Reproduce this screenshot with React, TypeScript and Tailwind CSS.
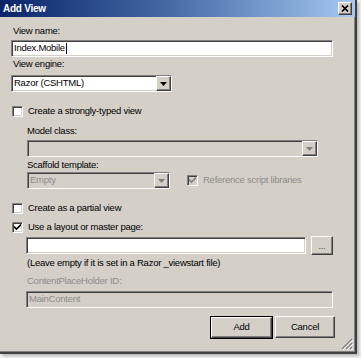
import React from 'react'

const font = { fontFamily: '"Liberation Sans", Arial, sans-serif' }

const sunken = 'border border-t-[#808080] border-l-[#808080] border-b-white border-r-white shadow-[inset_1px_1px_0_#404040,inset_-1px_-1px_0_#d4d0c8]'
const raised = 'border border-t-white border-l-white border-b-[#404040] border-r-[#404040] shadow-[inset_-1px_-1px_0_#808080]'

function Arrow({ disabled }: { disabled?: boolean }) {
  return (
    <div className={`flex items-center justify-center w-[15px] h-full bg-[#d4d0c8] ${raised}`}>
      <svg width="7" height="4" viewBox="0 0 7 4">
        <path d="M0 0h7L3.5 4z" fill={disabled ? '#808080' : '#000'} />
      </svg>
    </div>
  )
}

function Select({ value, disabled, className }: { value: string; disabled?: boolean; className: string }) {
  return (
    <div className={`flex h-[17px] ${disabled ? 'bg-[#d4d0c8]' : 'bg-white'} ${sunken} ${className}`}>
      <div className={`flex-1 flex items-center pl-[2px] ${disabled ? 'text-[#8c8c8c]' : 'text-black'}`}>{value}</div>
      <Arrow disabled={disabled} />
    </div>
  )
}

function Check({ checked, disabled }: { checked?: boolean; disabled?: boolean }) {
  return (
    <div className={`w-[11px] h-[11px] flex items-center justify-center ${disabled ? 'bg-[#d4d0c8]' : 'bg-white'} ${sunken}`}>
      {checked && (
        <svg width="7" height="7" viewBox="0 0 7 7">
          <path d="M0 2.5l2.5 2.5L7 0.5" stroke={disabled ? '#808080' : '#000'} strokeWidth="1.6" fill="none" />
        </svg>
      )}
    </div>
  )
}

export default function App() {
  return (
    <div className="w-[361px] h-[358px] bg-[#f2f2f2] text-[9.5px] tracking-[-0.25px] text-black" style={font}>
      <div className="w-[357px] h-[354px] bg-[#d4d0c8] border-r-2 border-b-2 border-r-[#404040] border-b-[#404040] shadow-[inset_-1px_-1px_0_#808080,2px_2px_3px_rgba(0,0,0,0.25)] flex flex-col relative">
        {/* title bar */}
        <div className="h-[17px] bg-linear-to-r from-[#0a246a] via-[#4a6ea8] to-[#a6caf0] flex items-center justify-between pl-[3px] pr-[3px]">
          <span className="text-white font-bold text-[10px]">Add View</span>
          <div className={`w-[14px] h-[13px] bg-[#d4d0c8] flex items-center justify-center ${raised}`}>
            <svg width="8" height="7" viewBox="0 0 8 7">
              <path d="M1 0.5l6 6M7 0.5l-6 6" stroke="#000" strokeWidth="1.7" />
            </svg>
          </div>
        </div>

        <div className="pl-[11px] flex flex-col">
          <div className="mt-[8px] ml-[2px] h-[12px] leading-[12px]">View name:</div>
          <div className={`mt-[3px] w-[322px] h-[17px] bg-white flex items-center pl-[2px] ${sunken}`}>
            Index.Mobile<span className="w-px h-[11px] bg-black ml-[1px]" />
          </div>

          <div className="mt-[1px] ml-[2px] h-[12px] leading-[12px]">View engine:</div>
          <Select value="Razor (CSHTML)" className="mt-[5px] w-[161px]" />

          <div className="mt-[14px] flex items-center gap-[5px] h-[11px] ml-[1px]">
            <Check />
            <span>Create a strongly-typed view</span>
          </div>

          <div className="ml-[16px] flex flex-col">
            <div className="mt-[8px] h-[12px] leading-[12px]">Model class:</div>
            <Select value="" disabled className="mt-[3px] w-[291px]" />
            <div className="mt-[2px] h-[12px] leading-[12px]">Scaffold template:</div>
            <div className="mt-[1px] flex items-center">
              <Select value="Empty" disabled className="w-[143px]" />
              <div className="ml-[17px] flex items-center gap-[5px] text-[#8c8c8c]">
                <Check checked disabled />
                <span>Reference script libraries</span>
              </div>
            </div>
          </div>

          <div className="mt-[14px] flex items-center gap-[5px] h-[11px] ml-[1px]">
            <Check />
            <span>Create as a partial view</span>
          </div>
          <div className="mt-[8px] flex items-center gap-[5px] h-[11px] ml-[1px]">
            <Check checked />
            <span>Use a layout or master page:</span>
          </div>

          <div className="ml-[15px] flex flex-col">
            <div className="mt-[3px] flex items-center">
              <div className={`w-[280px] h-[17px] bg-white ${sunken}`} />
              <div className={`ml-[5px] w-[22px] h-[19px] bg-[#d4d0c8] flex items-end justify-center pb-[3px] text-[#404040] text-[9px] leading-[9px] ${raised}`}>...</div>
            </div>
            <div className="mt-[2px] ml-[1px] h-[12px] leading-[12px]">(Leave empty if it is set in a Razor _viewstart file)</div>
            <div className="mt-[6px] ml-[1px] h-[12px] leading-[12px] text-[#8c8c8c]">ContentPlaceHolder ID:</div>
            <div className={`mt-[4px] w-[307px] h-[17px] bg-[#d4d0c8] flex items-center pl-[2px] text-[#8c8c8c] ${sunken}`}>MainContent</div>
          </div>

          <div className="mt-[8px] flex justify-end pr-[20px] gap-[2px]">
            <div className="w-[63px] h-[23px] border border-black">
              <div className={`w-full h-full bg-[#d4d0c8] flex items-center justify-center ${raised}`}>Add</div>
            </div>
            <div className={`w-[60px] h-[22px] bg-[#d4d0c8] flex items-center justify-center ${raised}`}>Cancel</div>
          </div>
        </div>

        {/* size grip */}
        <svg className="absolute right-[2px] bottom-[2px]" width="12" height="12" viewBox="0 0 12 12">
          <path d="M11 1L1 11M11 5L5 11M11 9L9 11" stroke="#808080" strokeWidth="1.2" />
          <path d="M12 2L2 12M12 6L6 12M12 10L10 12" stroke="#ffffff" strokeWidth="1" />
        </svg>
      </div>
    </div>
  )
}
